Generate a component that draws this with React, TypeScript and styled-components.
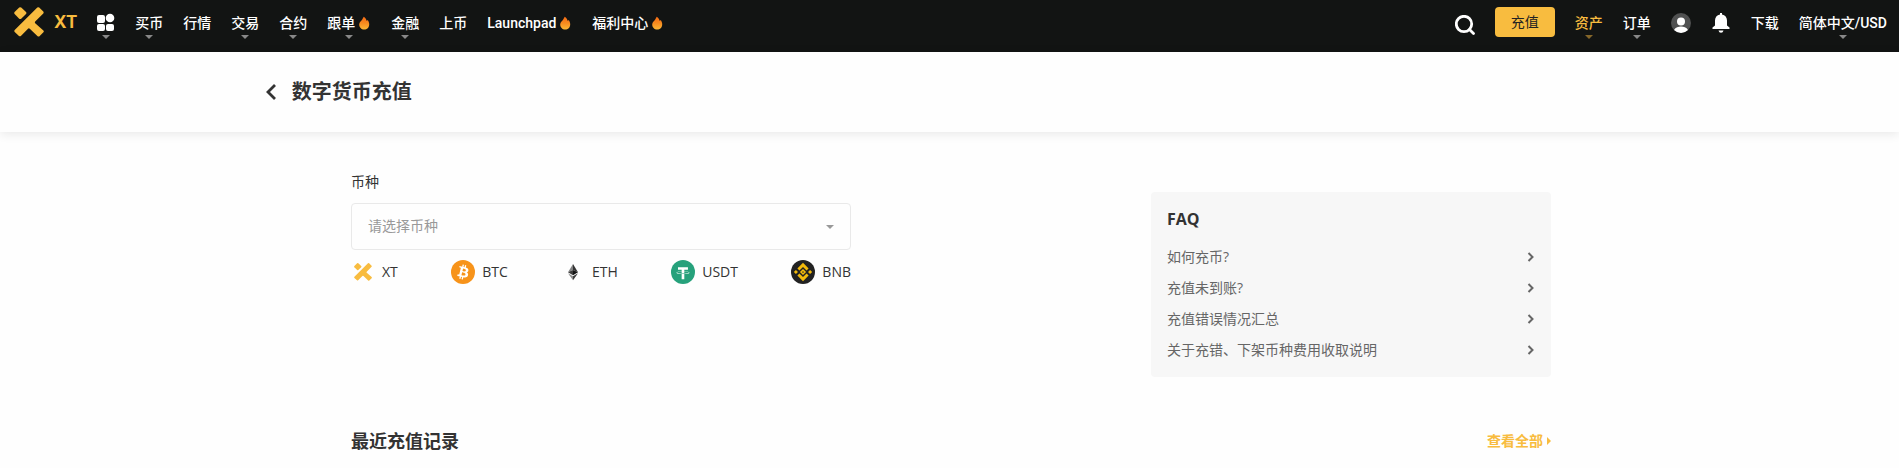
import React from "react";
import styled, { createGlobalStyle } from "styled-components";

const GlobalStyle = createGlobalStyle`
  *, *::before, *::after { box-sizing: border-box; }
  body {
    margin: 0;
    background: #fefefe;
    color: #333;
    font-family: "Open Sans", "Noto Sans CJK SC", sans-serif;
    font-size: 14px;
    line-height: 20px;
  }
  button, select { font: inherit; color: inherit; }
  button { border: 0; padding: 0; background: none; cursor: pointer; }
  a { color: inherit; text-decoration: none; }
  h1, h2, p, ul { margin: 0; padding: 0; }
  ul { list-style: none; }
`;

const Header = styled.header`
  display: flex;
  align-items: center;
  justify-content: space-between;
  min-height: 52px;
  padding: 0 12px 6px 14px;
  background: #121413;
  color: #fff;
  font-family: Roboto, "Noto Sans CJK SC", sans-serif;
  font-weight: 500;
  white-space: nowrap;
`;

const NavGroup = styled.nav`
  display: flex;
  align-items: center;
  gap: 20px;
`;

const Logo = styled.a`
  display: flex;
  align-items: center;
  gap: 10px;
  margin-bottom: 2px;
  color: #f8bc3f;
  font-family: Inter, sans-serif;
  font-size: 17px;
  font-weight: 700;
`;

const NavLink = styled.a<{ $caret?: boolean; $active?: boolean }>`
  position: relative;
  display: flex;
  align-items: center;
  color: ${(p) => (p.$active ? "#f8bc3f" : "#fff")};

  &::after {
    content: "";
    display: ${(p) => (p.$caret ? "block" : "none")};
    position: absolute;
    top: 22px;
    left: 50%;
    margin-left: -4px;
    border: 4px solid transparent;
    border-bottom: 0;
    border-top-color: ${(p) => (p.$active ? "#85672a" : "#888")};
  }
`;

const FlameIcon = styled.svg`
  width: 12px;
  height: 14px;
  margin-left: 4px;
`;

const DepositButton = styled.button`
  width: 60px;
  height: 30px;
  margin-bottom: 2px;
  border-radius: 4px;
  background: #f8bc3f;
  color: #222;
  font-weight: 400;
`;

const IconButton = styled.button<{ $low?: boolean }>`
  display: flex;
  margin-top: ${(p) => (p.$low ? "4px" : "0")};
`;

const TitleBar = styled.div`
  display: flex;
  align-items: center;
  gap: 15px;
  height: 80px;
  padding: 0 14%;
  box-shadow: 0 2px 10px rgba(0, 0, 0, 0.09);
`;

const PageTitle = styled.h1`
  font-size: 20px;
  line-height: 28px;
  font-weight: 700;
`;

const Content = styled.main`
  max-width: 1203px;
  margin: 0 auto;
  padding: 40px 0 0 3px;
`;

const Columns = styled.div`
  display: flex;
  align-items: flex-start;
  justify-content: space-between;
`;

const Form = styled.form`
  display: flex;
  flex-direction: column;
  width: 500px;
`;

const FieldLabel = styled.label`
  margin-bottom: 11px;
`;

const SelectBox = styled.div`
  position: relative;
  display: flex;
  margin-bottom: 10px;

  &::after {
    content: "";
    position: absolute;
    top: 22px;
    right: 17px;
    border: 4px solid transparent;
    border-bottom: 0;
    border-top-color: #999;
    pointer-events: none;
  }
`;

const CoinSelect = styled.select`
  width: 100%;
  height: 47px;
  padding: 0 16px 2px;
  appearance: none;
  border: 1px solid #e9e9e9;
  border-radius: 4px;
  background: #fefefe;
  color: #999;
`;

const CoinList = styled.div`
  display: flex;
  justify-content: space-between;
`;

const CoinButton = styled.button`
  display: flex;
  align-items: center;
  gap: 7px;
`;

const FaqCard = styled.aside`
  display: flex;
  flex-direction: column;
  gap: 17px;
  width: 400px;
  margin-top: 20px;
  padding: 16px 16px 17px;
  border-radius: 4px;
  background: #f7f7f7;
`;

const FaqTitle = styled.h2`
  font-size: 16px;
  line-height: 22px;
  font-weight: 700;
`;

const FaqList = styled.ul`
  display: flex;
  flex-direction: column;
  gap: 11px;
`;

const FaqLink = styled.a`
  display: flex;
  align-items: center;
  justify-content: space-between;
  color: #666;
`;

const RecordsHeader = styled.div`
  display: flex;
  align-items: center;
  justify-content: space-between;
  padding: 51px 0 14px;
`;

const RecordsTitle = styled.h2`
  font-size: 18px;
  line-height: 26px;
  font-weight: 700;
`;

const ViewAll = styled.a`
  display: flex;
  align-items: center;
  gap: 4px;
  color: #f8bc3f;
  font-weight: 700;

  &::after {
    content: "";
    border: 4px solid transparent;
    border-right: 0;
    border-left-color: #f8bc3f;
  }
`;

const XtMark = ({ size }: { size: number }) => (
  <svg width={size} height={size} viewBox="0 0 30 30" fill="#f8bc3f" aria-hidden="true">
    <path d="M5.2.5Q6.2-.2 7.200.5L12 5.100Q12.900 6.100 12 7.100L7.200 11.700Q6.200 12.500 5.200 11.700L.6 7.100Q-.2 6.100.6 5.100Z" />
    <path d="M23.300.5Q24.300-.2 25.200.5L29.300 4.600Q30 5.500 29.300 6.400L21.200 14.500Q20.500 15.300 21.200 16.200L29.400 23.500Q30.200 24.400 29.400 25.300L25.500 29.200Q24.500 30 23.600 29.200L15.800 21.700Q14.900 21 14 21.700L6.900 28.900Q5.900 29.700 5 28.900L.7 24.900Q-.1 24 .7 23Z" />
  </svg>
);

const Flame = () => (
  <FlameIcon viewBox="0 0 12 14" aria-hidden="true">
    <defs>
      <linearGradient id="flame" x1="0" y1="0" x2="0" y2="1">
        <stop offset="0" stopColor="#f56a13" />
        <stop offset=".5" stopColor="#f68b1f" />
        <stop offset="1" stopColor="#fbb735" />
      </linearGradient>
    </defs>
    <path fill="url(#flame)" d="M4.700.8C6.200 1.800 7.300 3.200 7.800 4.900L8.700 4C9.700 5.300 10.200 6.900 10.200 8.500C10.200 11.500 8 13.500 5.200 13.500C2.300 13.500.2 11.400.2 8.500C.2 6 2.100 5.100 3.200 3.400C3.800 2.500 4.300 1.700 4.700.8Z" />
  </FlameIcon>
);

const Chevron = ({ back }: { back?: boolean }) =>
  back ? (
    <svg width="11" height="18" viewBox="0 0 11 18" fill="none" stroke="#333" strokeWidth="2.800" aria-hidden="true">
      <path d="M9 2L2 9L9 16" />
    </svg>
  ) : (
    <svg width="8" height="10" viewBox="0 0 8 10" fill="none" stroke="#666" strokeWidth="2" aria-hidden="true">
      <path d="M1.500 1L5.500 5L1.500 9" />
    </svg>
  );

const BtcIcon = () => (
  <svg width="24" height="24" viewBox="0 0 32 32" aria-hidden="true">
    <circle cx="16" cy="16" r="16" fill="#f7931a" />
    <path
      fill="#fff"
      d="M23.189 14.020c.314-2.096-1.283-3.223-3.465-3.975l.708-2.840-1.728-.43-.690 2.765c-.454-.114-.920-.220-1.385-.326l.695-2.783L15.596 6l-.708 2.839c-.376-.086-.746-.170-1.104-.260l.002-.009-2.384-.595-.460 1.846s1.283.294 1.256.312c.700.175.826.638.805 1.006l-.806 3.235c.048.012.110.030.180.057l-.183-.045-1.130 4.532c-.086.212-.303.531-.793.410.018.025-1.256-.313-1.256-.313l-.858 1.978 2.250.561c.418.105.828.215 1.231.318l-.715 2.872 1.727.43.708-2.840c.472.127.930.245 1.378.357l-.706 2.828 1.728.43.715-2.866c2.948.558 5.164.333 6.097-2.333.752-2.146-.037-3.385-1.588-4.192 1.130-.260 1.980-1.003 2.207-2.538zm-3.950 5.538c-.533 2.147-4.148.986-5.320.695l.950-3.805c1.172.293 4.929.872 4.370 3.110zm.535-5.569c-.487 1.953-3.495.960-4.470.717l.860-3.450c.975.243 4.118.696 3.610 2.733z"
    />
  </svg>
);

const EthIcon = () => (
  <svg width="24" height="24" viewBox="0 0 24 24" aria-hidden="true">
    <path fill="#828384" d="M12 4L7 12.200L12 10Z" />
    <path fill="#343434" d="M12 4L17 12.200L12 10Z" />
    <path fill="#3c3c3b" d="M7 12.200L12 10V15.200Z" />
    <path fill="#141414" d="M17 12.200L12 10V15.200Z" />
    <path fill="#8c8c8c" d="M7 13.300L12 16.300V20.200Z" />
    <path fill="#3c3c3b" d="M17 13.300L12 16.300V20.200Z" />
  </svg>
);

const UsdtIcon = () => (
  <svg width="24" height="24" viewBox="0 0 32 32" aria-hidden="true">
    <circle cx="16" cy="16" r="16" fill="#26a17b" />
    <path
      fill="#fff"
      transform="translate(16 17) scale(.9) translate(-16 -16)"
      d="M17.922 17.383v-.002c-.110.008-.677.042-1.942.042-1.010 0-1.721-.030-1.971-.042v.003c-3.888-.171-6.790-.848-6.790-1.658 0-.809 2.902-1.486 6.790-1.660v2.644c.254.018.982.061 1.988.061 1.207 0 1.812-.050 1.925-.060v-2.643c3.880.173 6.775.850 6.775 1.658 0 .810-2.895 1.485-6.775 1.657m0-3.590v-2.366h5.414V7.819H8.595v3.608h5.414v2.365c-4.400.202-7.709 1.074-7.709 2.118 0 1.044 3.309 1.915 7.709 2.118v7.582h3.913v-7.584c4.393-.202 7.694-1.073 7.694-2.116 0-1.043-3.301-1.914-7.694-2.117"
    />
  </svg>
);

const BnbIcon = () => (
  <svg width="24" height="24" viewBox="0 0 32 32" aria-hidden="true">
    <circle cx="16" cy="16" r="16" fill="#222" />
    <g transform="translate(16 16) scale(1.220) translate(-16 -16)">
      <path
        fill="#f3ba0b"
        d="M12.116 14.404L16 10.520l3.886 3.886 2.260-2.260L16 6l-6.144 6.144 2.260 2.260zM6 16l2.260-2.260L10.520 16l-2.260 2.260L6 16zm6.116 1.596L16 21.480l3.886-3.886 2.260 2.259L16 26l-6.144-6.144 2.260-2.260zM21.480 16l2.260-2.260L26 16l-2.260 2.260L21.480 16z"
      />
      <path fill="none" stroke="#f3ba0b" strokeWidth="1.700" d="M16 13.800L18.200 16L16 18.200L13.800 16Z" />
    </g>
  </svg>
);

const coins = [
  { name: "XT", icon: <svg width="24" height="24" viewBox="-3 -3 24 24"><XtMark size={18} /></svg> },
  { name: "BTC", icon: <BtcIcon /> },
  { name: "ETH", icon: <EthIcon /> },
  { name: "USDT", icon: <UsdtIcon /> },
  { name: "BNB", icon: <BnbIcon /> },
];

const navItems = [
  { text: "买币", caret: true },
  { text: "行情" },
  { text: "交易", caret: true },
  { text: "合约", caret: true },
  { text: "跟单", caret: true, hot: true },
  { text: "金融", caret: true },
  { text: "上币" },
  { text: "Launchpad", hot: true },
  { text: "福利中心", hot: true },
];

const questions = ["如何充币?", "充值未到账?", "充值错误情况汇总", "关于充错、下架币种费用收取说明"];

export default function App() {
  return (
    <>
      <GlobalStyle />
      <Header>
        <NavGroup>
          <Logo href="#">
            <XtMark size={30} />
            XT
          </Logo>
          <NavLink href="#" $caret aria-label="更多">
            <svg width="18" height="20" viewBox="0 0 18 20" fill="#fff" aria-hidden="true">
              <rect x="0" y="2" width="8" height="8" rx="2" />
              <circle cx="13" cy="5" r="4.300" />
              <rect x="0" y="11" width="8" height="7" rx="2" />
              <rect x="9" y="11" width="8" height="7" rx="2" />
            </svg>
          </NavLink>
          {navItems.map((item) => (
            <NavLink href="#" key={item.text} $caret={item.caret}>
              {item.text}
              {item.hot && <Flame />}
            </NavLink>
          ))}
        </NavGroup>
        <NavGroup>
          <IconButton $low aria-label="搜索">
            <svg width="20" height="20" viewBox="0 0 20 20" fill="none" stroke="#fff" strokeWidth="2.800" aria-hidden="true">
              <circle cx="9" cy="9" r="7.700" />
              <path d="M14.500 14.500L18.500 18.500" strokeLinecap="round" />
            </svg>
          </IconButton>
          <DepositButton>充值</DepositButton>
          <NavLink href="#" $caret $active>资产</NavLink>
          <NavLink href="#" $caret>订单</NavLink>
          <IconButton aria-label="账户">
            <svg width="20" height="20" viewBox="0 0 20 20" aria-hidden="true">
              <circle cx="10" cy="10" r="10" fill="#505151" />
              <circle cx="10" cy="8.500" r="4" fill="#fff" />
              <path fill="#fff" d="M3 17.100C4.500 14.300 7.500 13.600 10 13.600S15.500 14.300 17 17.100Q14 20 10 20T3 17.100Z" />
            </svg>
          </IconButton>
          <IconButton aria-label="通知">
            <svg width="20" height="20" viewBox="0 0 20 20" fill="#fff" aria-hidden="true">
              <path d="M9 0H11V1.400C14.200 1.900 16 4.400 16 7.500V12.500L18.500 14.500V16H1.500V14.500L4 12.500V7.500C4 4.400 5.800 1.900 9 1.400Z" />
              <path d="M7.500 17.500H12.500Q12 19.800 10 19.800T7.500 17.500Z" />
            </svg>
          </IconButton>
          <NavLink href="#">下载</NavLink>
          <NavLink href="#" $caret>简体中文/USD</NavLink>
        </NavGroup>
      </Header>
      <TitleBar>
        <IconButton aria-label="返回">
          <Chevron back />
        </IconButton>
        <PageTitle>数字货币充值</PageTitle>
      </TitleBar>
      <Content>
        <Columns>
          <Form>
            <FieldLabel htmlFor="coin">币种</FieldLabel>
            <SelectBox>
              <CoinSelect id="coin" defaultValue="">
                <option value="">请选择币种</option>
                {coins.map((coin) => (
                  <option key={coin.name}>{coin.name}</option>
                ))}
              </CoinSelect>
            </SelectBox>
            <CoinList>
              {coins.map((coin) => (
                <CoinButton type="button" key={coin.name}>
                  {coin.icon}
                  {coin.name}
                </CoinButton>
              ))}
            </CoinList>
          </Form>
          <FaqCard>
            <FaqTitle>FAQ</FaqTitle>
            <FaqList>
              {questions.map((question) => (
                <li key={question}>
                  <FaqLink href="#">
                    {question}
                    <Chevron />
                  </FaqLink>
                </li>
              ))}
            </FaqList>
          </FaqCard>
        </Columns>
        <RecordsHeader>
          <RecordsTitle>最近充值记录</RecordsTitle>
          <ViewAll href="#">查看全部</ViewAll>
        </RecordsHeader>
      </Content>
    </>
  );
}
